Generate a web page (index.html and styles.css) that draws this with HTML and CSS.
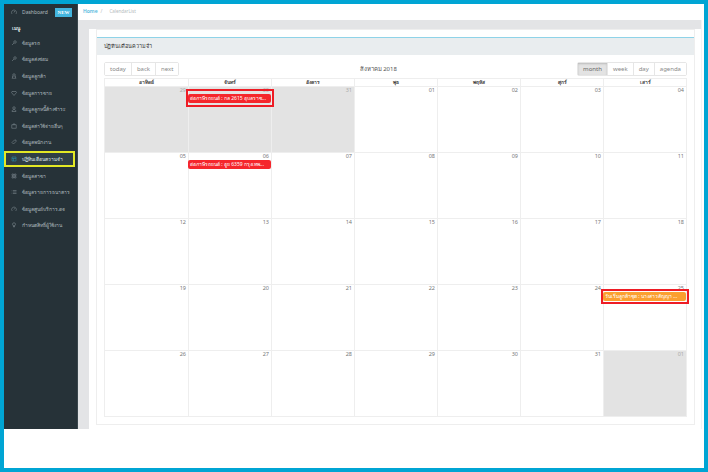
FILE: index.html
```html
<!DOCTYPE html>
<html lang="th">
<head>
<meta charset="utf-8">
<title>CalendarList</title>
<link rel="stylesheet" href="styles.css">
</head>
<body>
<div class="frame">
  <div class="app">
    <aside class="sidebar">
      <a class="item dash"><svg class="ic" viewBox="0 0 12 12"><path d="M2 10A5 5 0 1 1 10 10M6 7 7.500 4"/></svg><span>Dashboard</span><b class="new">NEW</b></a>
      <div class="menu-head">เมนู</div>
      <a class="item"><svg class="ic" viewBox="0 0 12 12"><circle cx="8" cy="4" r="2.500"/><path d="M6 6 2 10"/></svg><span>ข้อมูลรถ</span></a>
      <a class="item"><svg class="ic" viewBox="0 0 12 12"><circle cx="8" cy="4" r="2.500"/><path d="M6 6 2 10"/></svg><span>ข้อมูลส่งซ่อม</span></a>
      <a class="item"><svg class="ic" viewBox="0 0 12 12"><circle cx="6" cy="4" r="2.500"/><path d="M3 6v4M9 6v4M1.500 10.500h9"/></svg><span>ข้อมูลลูกค้า</span></a>
      <a class="item"><svg class="ic" viewBox="0 0 12 12"><path d="M2 3h8l1 2-5 6-5-6z"/></svg><span>ข้อมูลการขาย</span></a>
      <a class="item"><svg class="ic" viewBox="0 0 12 12"><circle cx="6" cy="4" r="2.500"/><path d="M2 11c0-5 8-5 8 0z"/></svg><span>ข้อมูลลูกหนี้ค้างชำระ</span></a>
      <a class="item"><svg class="ic" viewBox="0 0 12 12"><path d="M1.500 3.500h9v7h-9zM4 3.500V2h4v1.500"/></svg><span>ข้อมูลค่าใช้จ่ายอื่นๆ</span></a>
      <a class="item"><svg class="ic" viewBox="0 0 12 12"><path d="M2 7 7 2h3v3l-5 5z"/></svg><span>ข้อมูลพนักงาน</span></a>
      <a class="item active"><svg class="ic" viewBox="0 0 12 12"><path d="M2 2h8v8H2zM2 5h8M5 5v5"/></svg><span>ปฏิทินเตือนความจำ</span></a>
      <a class="item"><svg class="ic" viewBox="0 0 12 12"><path d="M2 2h3v3H2zM7 2h3v3H7zM2 7h3v3H2zM7 7h3v3H7z"/></svg><span>ข้อมูลสาขา</span></a>
      <a class="item"><svg class="ic" viewBox="0 0 12 12"><path d="M4 3h7M4 6h7M4 9h7M1.500 3h1M1.500 6h1M1.500 9h1"/></svg><span>ข้อมูลรายการธนาคาร</span></a>
      <a class="item"><svg class="ic" viewBox="0 0 12 12"><path d="M2.500 10A4.700 4.700 0 1 1 9.500 10M6 7 7.500 4.500"/></svg><span>ข้อมูลศูนย์บริการ.ตจ</span></a>
      <a class="item"><svg class="ic" viewBox="0 0 12 12"><circle cx="6" cy="4.500" r="3"/><path d="M5 8v2h2V8"/></svg><span>กำหนดสิทธิ์ผู้ใช้งาน</span></a>
    </aside>
    <main class="main">
      <nav class="crumb"><a>Home</a><i>/</i><span>CalendarList</span></nav>
      <div class="page">
        <section class="outer">
          <div class="card">
            <header class="card-head">ปฏิทินเตือนความจำ</header>
            <div class="card-body">
              <div class="toolbar">
                <div class="group"><button>today</button><button>back</button><button>next</button></div>
                <div class="month">สิงหาคม 2018</div>
                <div class="group"><button class="on">month</button><button>week</button><button>day</button><button>agenda</button></div>
              </div>
              <div class="calendar">
                <div class="dow"><div>อาทิตย์</div><div>จันทร์</div><div>อังคาร</div><div>พุธ</div><div>พฤหัส</div><div>ศุกร์</div><div>เสาร์</div></div>
                <div class="week">
                  <div class="day off"><span>29</span></div>
                  <div class="day off"><span>30</span><div class="event red annot annot-a">ต่อภาษีรถยนต์ : กล 2615 อุบลราช...</div></div>
                  <div class="day off"><span>31</span></div>
                  <div class="day"><span>01</span></div><div class="day"><span>02</span></div><div class="day"><span>03</span></div><div class="day"><span>04</span></div>
                </div>
                <div class="week">
                  <div class="day"><span>05</span></div>
                  <div class="day"><span>06</span><div class="event red">ต่อภาษีรถยนต์ : อูย 6359 กรุงเทพ...</div></div>
                  <div class="day"><span>07</span></div><div class="day"><span>08</span></div><div class="day"><span>09</span></div><div class="day"><span>10</span></div><div class="day"><span>11</span></div>
                </div>
                <div class="week">
                  <div class="day"><span>12</span></div><div class="day"><span>13</span></div><div class="day"><span>14</span></div><div class="day"><span>15</span></div><div class="day"><span>16</span></div><div class="day"><span>17</span></div><div class="day"><span>18</span></div>
                </div>
                <div class="week">
                  <div class="day"><span>19</span></div><div class="day"><span>20</span></div><div class="day"><span>21</span></div><div class="day"><span>22</span></div><div class="day"><span>23</span></div><div class="day"><span>24</span></div>
                  <div class="day"><span>25</span><div class="event orange annot annot-b">วันเริ่มลูกค้าชุด : นางสาวสัญญา ...</div></div>
                </div>
                <div class="week">
                  <div class="day"><span>26</span></div><div class="day"><span>27</span></div><div class="day"><span>28</span></div><div class="day"><span>29</span></div><div class="day"><span>30</span></div><div class="day"><span>31</span></div>
                  <div class="day off"><span>01</span></div>
                </div>
              </div>
            </div>
          </div>
        </section>
      </div>
    </main>
  </div>
</div>
</body>
</html>
```
FILE: styles.css
```css
* { box-sizing: border-box; }
html, body { margin: 0; height: 100%; }
body { font-family: "Noto Sans", "Open Sans", "DejaVu Sans", sans-serif; background: #fff; color: #444; }
.frame { width: 708px; height: 472px; border: 4px solid #00a5d4; background: #fff; overflow: hidden; }
.app { display: flex; height: 425px; }
.sidebar { width: 74px; flex: none; background: #263238; border-right: 1px solid #3a474d; color: #aeb9bd; font-size: 5px; }
.item { display: flex; align-items: center; height: 16.6px; padding-left: 7px; gap: 5px; white-space: nowrap; position: relative; }
.ic { width: 6px; height: 6px; flex: none; fill: none; stroke: #8a979d; stroke-width: 1; }
.dash { height: 15px; }
.new { position: absolute; left: 51px; top: 4px; width: 17px; height: 9px; background: #43b5de; color: #fff; font-size: 5px; line-height: 9px; text-align: center; font-family: "Liberation Serif", serif; }
.menu-head { height: 15.500px; padding-left: 8px; line-height: 18px; font-weight: 700; color: #dfe5e7; }
.active { background: #2f3e45; outline: 2px solid #e3e825; outline-offset: -2px; margin-right: 2px; color: #dfe5e7; }
.active .ic { stroke: #2a95b5; }
.main { flex: 1; min-width: 0; display: flex; flex-direction: column; }
.crumb { height: 16px; background: #fff; font-size: 5px; line-height: 15px; padding-left: 5px; color: #b6bcc0; flex: none; }
.crumb a { color: #53b7dd; font-weight: 600; }
.crumb i { font-style: normal; margin: 0 7px 0 3px; }
.crumb span { font-size: 4.500px; }
.page { flex: 1; margin-right: 2px; border-right: 1px solid #f3f3f3; background: linear-gradient(#e3e4e6, #e3e4e6) left top / 100% 9px no-repeat, linear-gradient(#e3e4e6, #e3e4e6) left top / 11px 100% no-repeat, #fff; padding: 9px 6px 4px 18px; }
.outer { height: 396px; background: #fff; border: 1px solid #eee; padding: 7px 0 0; }
.card { border-top: 1px solid #8fd3e8; height: 100%; }
.card-head { height: 17px; background: #e9edef; color: #333; font-size: 5.500px; line-height: 17px; padding-left: 7px; }
.card-body { padding: 7px 7px 0; }
.toolbar { display: flex; justify-content: space-between; align-items: center; height: 14px; margin-bottom: 2px; }
.group { display: flex; border: 1px solid #e6e6e6; border-radius: 2px; height: 14px; }
.group button { font: 6px "Noto Sans", sans-serif; color: #888; background: #fff; border: 0; border-left: 1px solid #e6e6e6; padding: 0 5px; height: 12px; }
.group button:first-child { border-left: 0; }
.group button.on { background: #e3e3e3; box-shadow: inset 0 1px 2px #bbb; color: #666; }
.month { font-size: 6px; color: #555; }
.calendar { width: 583px; border: 1px solid #eee; }
.dow { display: grid; grid-template-columns: repeat(7, 1fr); height: 7px; font-size: 5px; line-height: 7px; font-weight: 700; text-align: center; color: #444; }
.dow div + div { border-left: 1px solid #eee; }
.week { display: grid; grid-template-columns: repeat(7, 1fr); height: 66px; border-top: 1px solid #eee; }
.day { border-left: 1px solid #eee; font-size: 5.500px; color: #777; text-align: right; line-height: 6px; min-width: 0; }
.day:first-child { border-left: 0; }
.day span { display: block; height: 7px; padding-right: 2px; }
.off { background: #e3e3e3; color: #aaa; }
.event { height: 9px; line-height: 9px; border-radius: 2px; color: #fff; font-size: 5px; text-align: left; padding-left: 2px; margin-left: -1px; white-space: nowrap; overflow: hidden; }
.red { background: #f5262c; }
.orange { background: #fb9f2f; }
.annot { overflow: visible; position: relative; }
.annot::after { content: ""; position: absolute; border: 2px solid #ee1c25; }
.annot-a::after { inset: -5px -3px -4px -2px; }
.annot-b::after { inset: -3px -3px -3px -2px; }
```
